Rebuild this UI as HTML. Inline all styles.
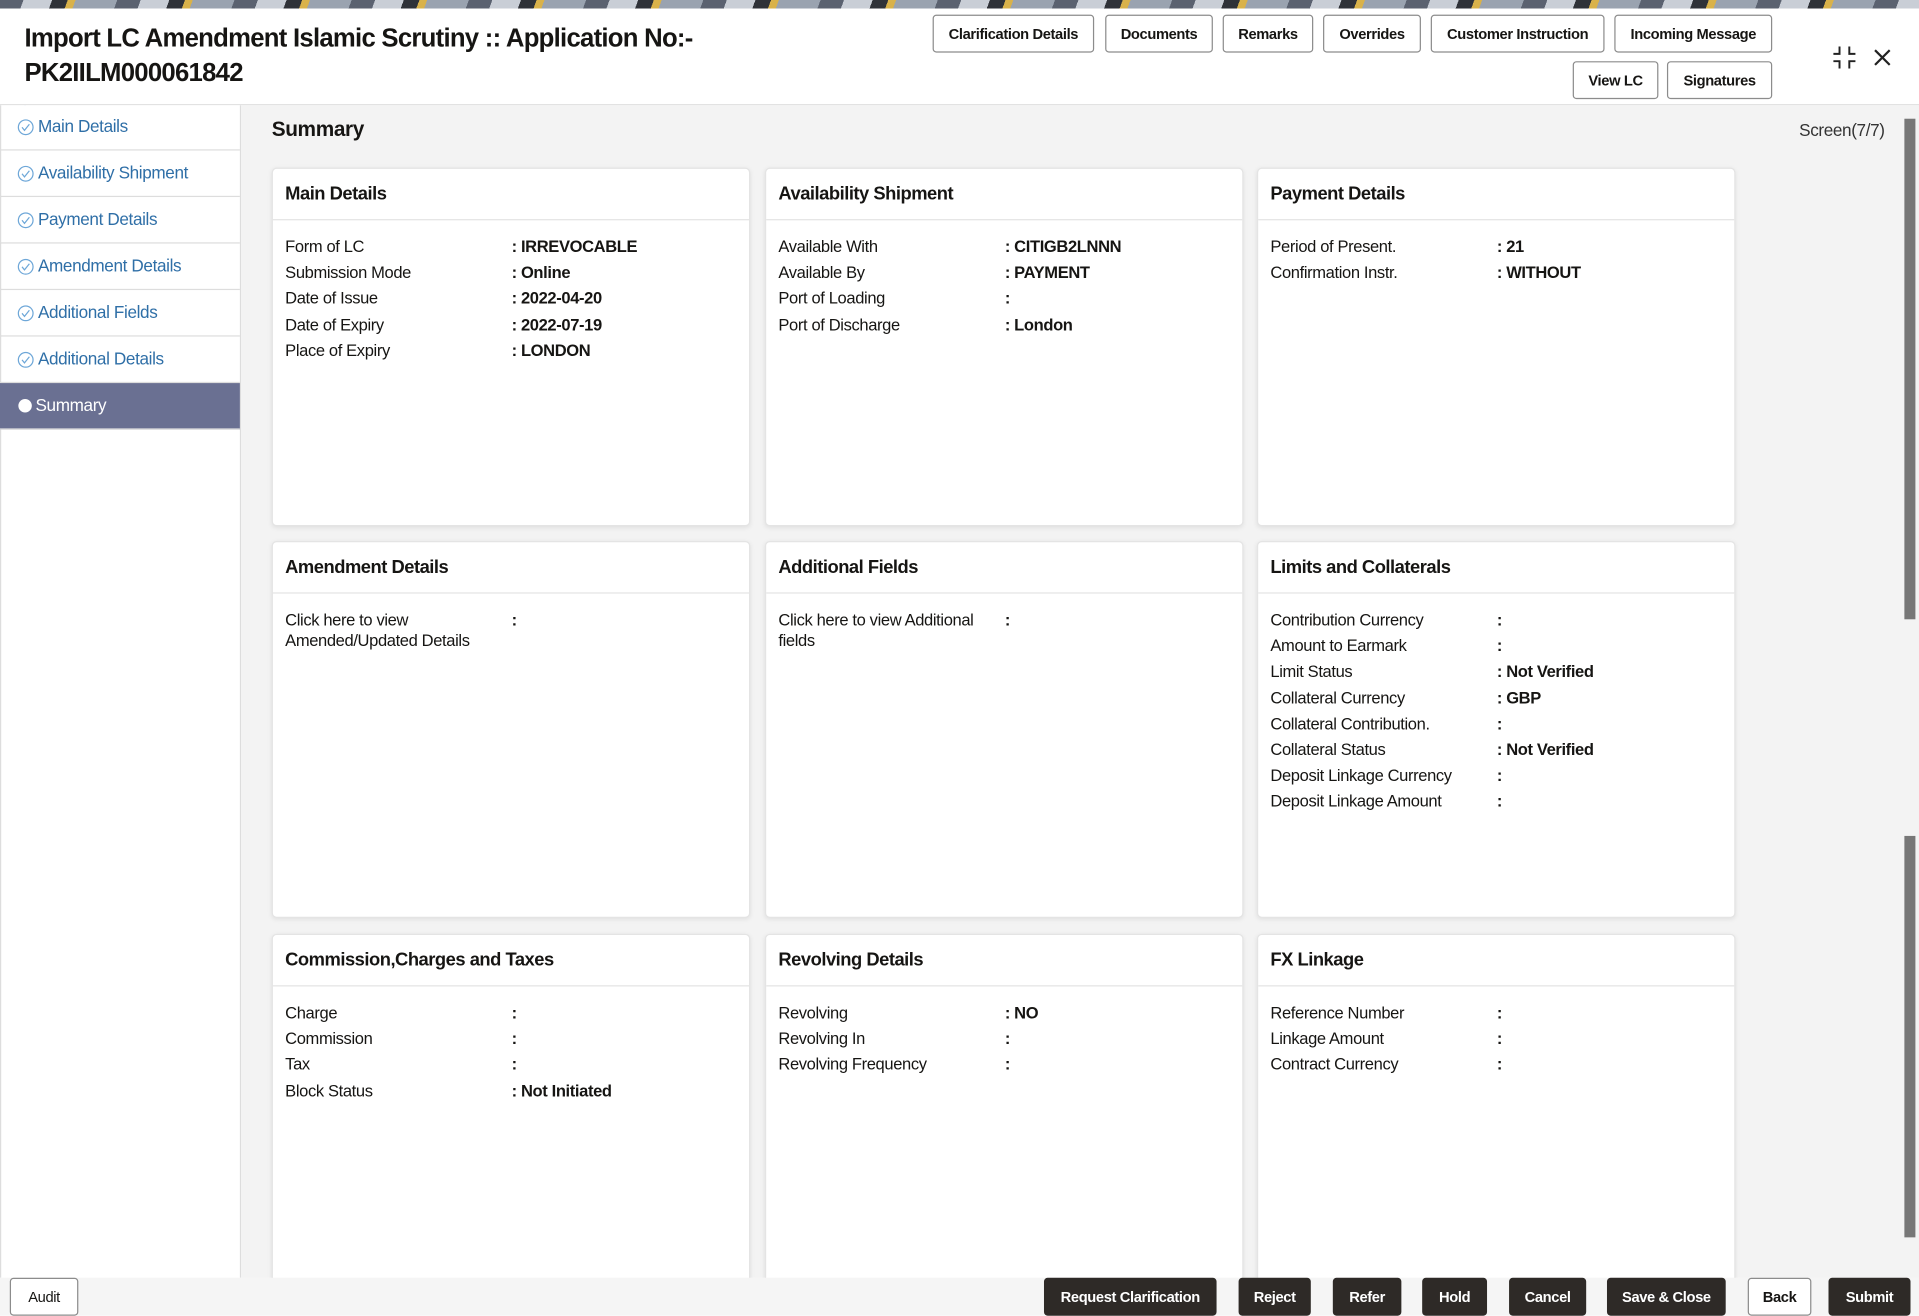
<!DOCTYPE html>
<html><head><meta charset="utf-8"><style>
*{box-sizing:border-box;margin:0;padding:0}
html,body{width:1919px;height:1316px;overflow:hidden;background:#fff}
#w{position:absolute;left:0;top:0;width:1568px;height:1075px;transform:scale(1.2239);transform-origin:0 0;font-family:"Liberation Sans",sans-serif;color:#161513;letter-spacing:-0.3px}
.a{position:absolute}
.stripe{left:0;top:0;width:1568px;height:7px;background:repeating-linear-gradient(110deg,#5b6270 0 18px,#c9ced6 18px 40px,#2f3238 40px 52px,#d9b24a 52px 58px,#9aa3b0 58px 90px)}
.hdr{left:0;top:7px;width:1568px;height:79px;background:#fff;border-bottom:1px solid #e2e2e2}
.title{left:20px;top:18px;font-size:21px;font-weight:bold;line-height:28px;letter-spacing:-0.6px;color:#161513}
.btn{position:absolute;height:31px;border:1px solid #8c8c8c;border-radius:3px;background:#fff;font-size:12px;display:flex;align-items:center;justify-content:center;color:#161513;font-weight:bold;letter-spacing:-0.3px}
.dk{background:#2e2a27;border-color:#2e2a27;color:#fff}
.side{left:0;top:86px;width:197px;height:958px;background:#fff;border-right:1px solid #ddd;border-left:1px solid #ddd}
.it{position:absolute;left:0;width:196px;height:38px;border-bottom:1px solid #ddd;font-size:14px;color:#2f6fa7;padding-left:31px;line-height:36px}
.it:after{content:"";position:absolute;left:20px;top:0;width:1px;height:38px;background:#6ea7d8;z-index:-1}
.it svg{position:absolute;left:14px;top:12px}
.sel{background:#6a7092;color:#fff}
.sel:before{content:"";position:absolute;left:15px;top:13px;width:11px;height:11px;border-radius:50%;background:#fff}
.main{left:197px;top:86px;width:1371px;height:958px;background:#f3f3f3}
.card{position:absolute;width:391px;background:#fff;border:1px solid #e4e4e4;border-radius:4px;box-shadow:0 1px 4px rgba(0,0,0,.08)}
.card h3{font-size:15px;font-weight:bold;height:42px;line-height:42px;padding-left:10px;border-bottom:1px solid #e4e4e4;letter-spacing:-0.4px}
.rows{padding:11px 10px 0 10px;font-size:13.5px}
.r{display:flex;line-height:21.2px}
.r .l{width:185px}
.r .v{font-weight:bold}
.foot{left:0;top:1044px;width:1568px;height:31px;background:#f5f5f5}
</style></head><body><div id="w">
<div class="a stripe"></div>
<div class="a hdr"></div>
<div class="a title">Import LC Amendment Islamic Scrutiny :: Application No:-<br>PK2IILM000061842</div>
<div class="btn" style="left:762px;top:12px;width:132px">Clarification Details</div>
<div class="btn" style="left:903px;top:12px;width:88px">Documents</div>
<div class="btn" style="left:999px;top:12px;width:74px">Remarks</div>
<div class="btn" style="left:1081px;top:12px;width:80px">Overrides</div>
<div class="btn" style="left:1169px;top:12px;width:142px">Customer Instruction</div>
<div class="btn" style="left:1319px;top:12px;width:129px">Incoming Message</div>
<div class="btn" style="left:1285px;top:50px;width:70px">View LC</div>
<div class="btn" style="left:1362px;top:50px;width:86px">Signatures</div>
<svg class="a" style="left:1497px;top:37px" width="20" height="20" viewBox="0 0 20 20" fill="none" stroke="#222" stroke-width="1.6"><path d="M6 1v6H1M14 1v6h5M6 19v-6H1M14 19v-6h5"/></svg>
<svg class="a" style="left:1531px;top:40px" width="14" height="14" viewBox="0 0 14 14" stroke="#222" stroke-width="1.8"><path d="M1 1l12 12M13 1L1 13"/></svg>

<div class="a side"></div>
<div class="it" style="top:85px"><svg width="14" height="14" viewBox="0 0 14 14" fill="#fff" stroke="#6ea7d8"><circle cx="7" cy="7" r="6"/><path d="M4 7l2 2.5 4-5" fill="none"/></svg>Main Details</div>
<div class="it" style="top:123px"><svg width="14" height="14" viewBox="0 0 14 14" fill="#fff" stroke="#6ea7d8"><circle cx="7" cy="7" r="6"/><path d="M4 7l2 2.5 4-5" fill="none"/></svg>Availability Shipment</div>
<div class="it" style="top:161px"><svg width="14" height="14" viewBox="0 0 14 14" fill="#fff" stroke="#6ea7d8"><circle cx="7" cy="7" r="6"/><path d="M4 7l2 2.5 4-5" fill="none"/></svg>Payment Details</div>
<div class="it" style="top:199px"><svg width="14" height="14" viewBox="0 0 14 14" fill="#fff" stroke="#6ea7d8"><circle cx="7" cy="7" r="6"/><path d="M4 7l2 2.5 4-5" fill="none"/></svg>Amendment Details</div>
<div class="it" style="top:237px"><svg width="14" height="14" viewBox="0 0 14 14" fill="#fff" stroke="#6ea7d8"><circle cx="7" cy="7" r="6"/><path d="M4 7l2 2.5 4-5" fill="none"/></svg>Additional Fields</div>
<div class="it" style="top:275px"><svg width="14" height="14" viewBox="0 0 14 14" fill="#fff" stroke="#6ea7d8"><circle cx="7" cy="7" r="6"/><path d="M4 7l2 2.5 4-5" fill="none"/></svg>Additional Details</div>
<div class="it sel" style="top:313px;padding-left:29px">Summary</div>

<div class="a main"></div>
<div class="a" style="left:222px;top:96px;font-size:17px;font-weight:bold">Summary</div>
<div class="a" style="left:1470px;top:98px;font-size:14px;color:#333">Screen(7/7)</div>
<div class="a" style="left:1556px;top:97px;width:9px;height:409px;background:#777"></div>
<div class="a" style="left:1556px;top:683px;width:9px;height:328px;background:#777"></div>

<div class="card" style="left:222px;top:137px;height:293px"><h3>Main Details</h3><div class="rows">
<div class="r"><span class="l">Form of LC</span><span class="v">: IRREVOCABLE</span></div>
<div class="r"><span class="l">Submission Mode</span><span class="v">: Online</span></div>
<div class="r"><span class="l">Date of Issue</span><span class="v">: 2022-04-20</span></div>
<div class="r"><span class="l">Date of Expiry</span><span class="v">: 2022-07-19</span></div>
<div class="r"><span class="l">Place of Expiry</span><span class="v">: LONDON</span></div></div></div>
<div class="card" style="left:625px;top:137px;height:293px"><h3>Availability Shipment</h3><div class="rows">
<div class="r"><span class="l">Available With</span><span class="v">: CITIGB2LNNN</span></div>
<div class="r"><span class="l">Available By</span><span class="v">: PAYMENT</span></div>
<div class="r"><span class="l">Port of Loading</span><span class="v">:</span></div>
<div class="r"><span class="l">Port of Discharge</span><span class="v">: London</span></div></div></div>
<div class="card" style="left:1027px;top:137px;height:293px"><h3>Payment Details</h3><div class="rows">
<div class="r"><span class="l">Period of Present.</span><span class="v">: 21</span></div>
<div class="r"><span class="l">Confirmation Instr.</span><span class="v">: WITHOUT</span></div></div></div>

<div class="card" style="left:222px;top:442px;height:308px"><h3>Amendment Details</h3><div class="rows">
<div class="r"><span class="l" style="line-height:17px;padding-top:2px">Click here to view Amended/Updated Details</span><span class="v">:</span></div></div></div>
<div class="card" style="left:625px;top:442px;height:308px"><h3>Additional Fields</h3><div class="rows">
<div class="r"><span class="l" style="line-height:17px;padding-top:2px">Click here to view Additional fields</span><span class="v">:</span></div></div></div>
<div class="card" style="left:1027px;top:442px;height:308px"><h3>Limits and Collaterals</h3><div class="rows">
<div class="r"><span class="l">Contribution Currency</span><span class="v">:</span></div>
<div class="r"><span class="l">Amount to Earmark</span><span class="v">:</span></div>
<div class="r"><span class="l">Limit Status</span><span class="v">: Not Verified</span></div>
<div class="r"><span class="l">Collateral Currency</span><span class="v">: GBP</span></div>
<div class="r"><span class="l">Collateral Contribution.</span><span class="v">:</span></div>
<div class="r"><span class="l">Collateral Status</span><span class="v">: Not Verified</span></div>
<div class="r"><span class="l">Deposit Linkage Currency</span><span class="v">:</span></div>
<div class="r"><span class="l">Deposit Linkage Amount</span><span class="v">:</span></div></div></div>

<div class="card" style="left:222px;top:763px;height:290px"><h3>Commission,Charges and Taxes</h3><div class="rows">
<div class="r"><span class="l">Charge</span><span class="v">:</span></div>
<div class="r"><span class="l">Commission</span><span class="v">:</span></div>
<div class="r"><span class="l">Tax</span><span class="v">:</span></div>
<div class="r"><span class="l">Block Status</span><span class="v">: Not Initiated</span></div></div></div>
<div class="card" style="left:625px;top:763px;height:290px"><h3>Revolving Details</h3><div class="rows">
<div class="r"><span class="l">Revolving</span><span class="v">: NO</span></div>
<div class="r"><span class="l">Revolving In</span><span class="v">:</span></div>
<div class="r"><span class="l">Revolving Frequency</span><span class="v">:</span></div></div></div>
<div class="card" style="left:1027px;top:763px;height:290px"><h3>FX Linkage</h3><div class="rows">
<div class="r"><span class="l">Reference Number</span><span class="v">:</span></div>
<div class="r"><span class="l">Linkage Amount</span><span class="v">:</span></div>
<div class="r"><span class="l">Contract Currency</span><span class="v">:</span></div></div></div>

<div class="a foot"></div>
<div class="btn" style="left:8px;top:1044px;width:56px;font-weight:normal">Audit</div>
<div class="btn dk" style="left:853px;top:1044px;width:141px">Request Clarification</div>
<div class="btn dk" style="left:1012px;top:1044px;width:59px">Reject</div>
<div class="btn dk" style="left:1089px;top:1044px;width:56px">Refer</div>
<div class="btn dk" style="left:1162px;top:1044px;width:53px">Hold</div>
<div class="btn dk" style="left:1233px;top:1044px;width:63px">Cancel</div>
<div class="btn dk" style="left:1313px;top:1044px;width:97px">Save &amp; Close</div>
<div class="btn" style="left:1428px;top:1044px;width:52px">Back</div>
<div class="btn dk" style="left:1494px;top:1044px;width:67px">Submit</div>
</div></body></html>
